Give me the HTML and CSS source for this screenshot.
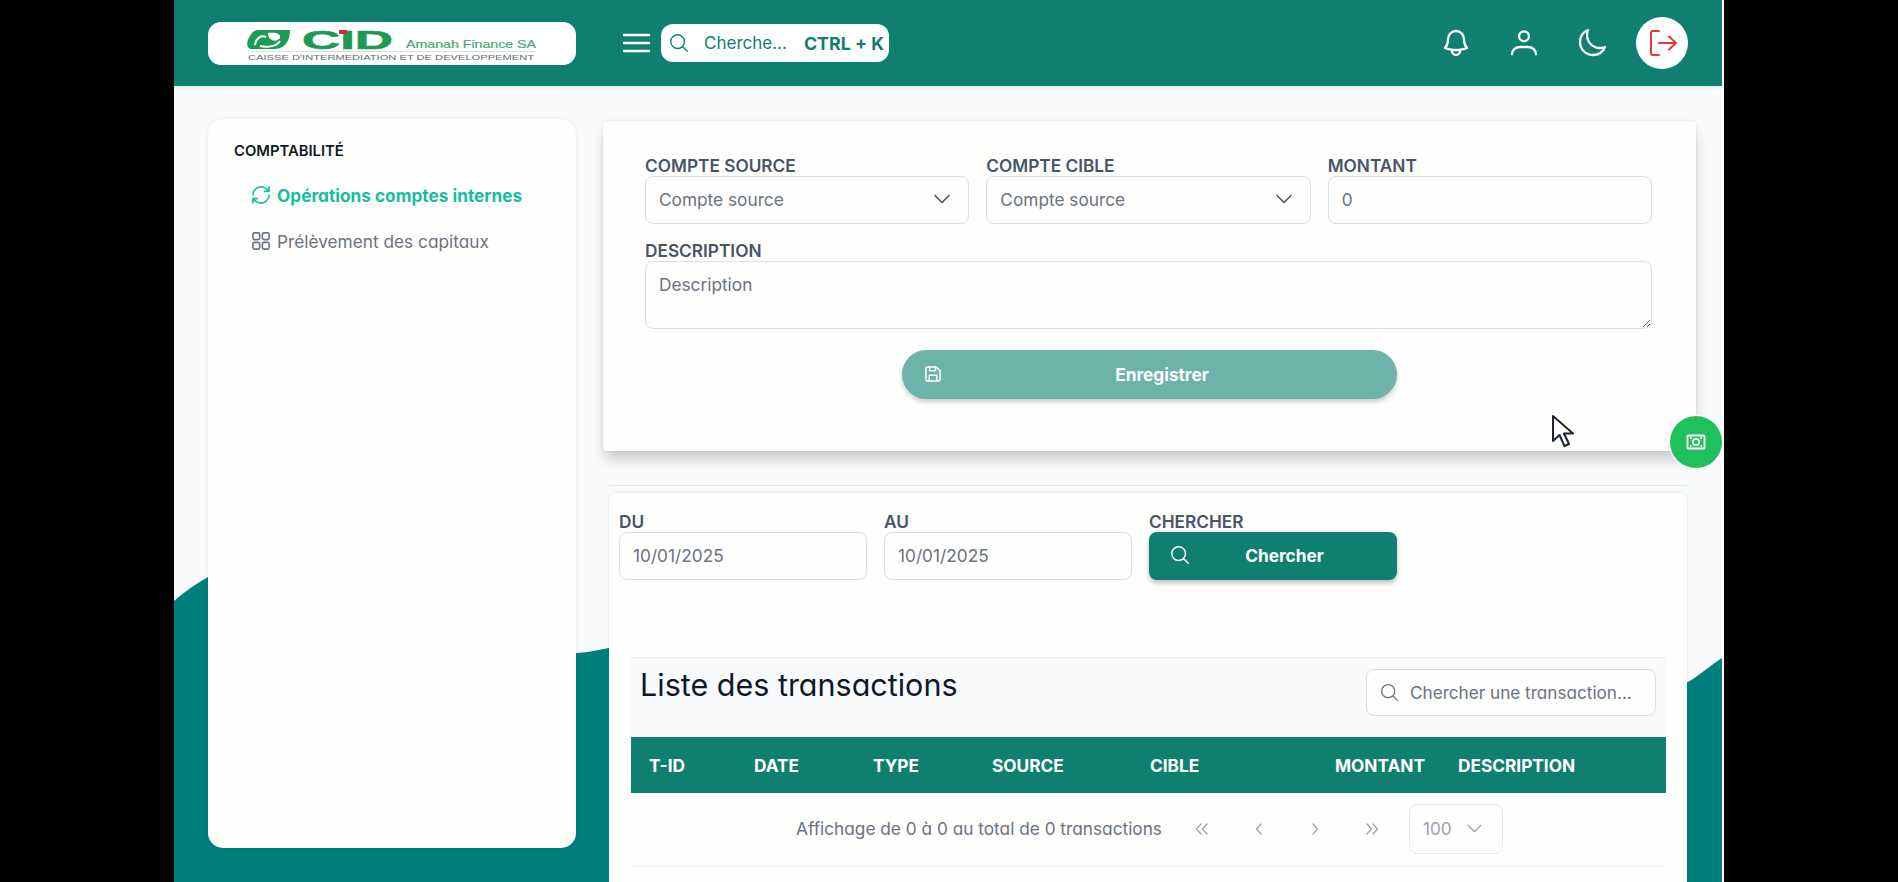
FILE: index.html
```html
<!DOCTYPE html>
<html lang="fr">
<head>
<meta charset="utf-8">
<title>Comptabilité</title>
<link rel="stylesheet" href="styles.css">
</head>
<body>
<div class="app">
  <svg class="wave" viewBox="0 0 1548 796" preserveAspectRatio="none" aria-hidden="true">
    <path d="M0 515 C40 480 110 450 180 462 C270 478 340 568 402 567 C520 560 700 400 900 430 C1140 470 1300 660 1514 596 C1525 590 1538 578 1548 572 L1548 796 L0 796 Z"/>
  </svg>
  <header class="topbar">
    <div class="logo">
      <svg viewBox="0 0 368 43" width="368" height="43" aria-label="CID">
        <path class="logo-leaf" d="M50 8 H82 C82 20 76 27 66 27 H44 C38 27 38 20 42 14 C44 10 47 8 50 8 Z"/>
        <path class="logo-inner" d="M60 11 C69 10 73 12 72 16 C68 21 60 19 60 11 Z"/>
        <path class="logo-swirl" d="M47 23 C48 16 53 13 58 15 M52 24 C60 26 69 24 72 19"/>
        <text class="logo-cid" x="94" y="27" textLength="91" lengthAdjust="spacingAndGlyphs">CID</text>
        <rect class="logo-dot" x="131" y="8" width="8" height="4"/>
        <text class="logo-name" x="198" y="26" textLength="130" lengthAdjust="spacingAndGlyphs">Amanah Finance SA</text>
        <line class="logo-rule" x1="40" y1="29.5" x2="328" y2="29.5"/>
        <text class="logo-sub" x="40" y="38" textLength="286" lengthAdjust="spacingAndGlyphs">CAISSE D'INTERMEDIATION ET DE DEVELOPPEMENT</text>
      </svg>
    </div>
    <button class="menu-btn" aria-label="Menu">
      <svg viewBox="0 0 27 20" width="27" height="20"><path d="M1 2h25M1 10h25M1 18h25"/></svg>
    </button>
    <div class="quick-search">
      <svg class="qs-icon" viewBox="0 0 24 24" width="22" height="22"><path d="m21 21-5.197-5.197m0 0A7.5 7.5 0 1 0 5.196 5.196a7.5 7.5 0 0 0 10.607 10.607Z"/></svg>
      <span class="qs-text">Cherche...</span>
      <span class="qs-key">CTRL + K</span>
    </div>
    <div class="top-actions">
      <button class="top-icon" aria-label="Notifications"><svg viewBox="0 0 24 24" width="32" height="32"><path d="M14.857 17.082a23.848 23.848 0 0 0 5.454-1.31A8.967 8.967 0 0 1 18 9.75V9A6 6 0 0 0 6 9v.75a8.967 8.967 0 0 1-2.312 6.022c1.733.64 3.56 1.085 5.455 1.31m5.714 0a24.255 24.255 0 0 1-5.714 0m5.714 0a3 3 0 1 1-5.714 0"/></svg></button>
      <button class="top-icon" aria-label="Profil"><svg viewBox="0 0 24 24" width="32" height="32"><circle cx="12" cy="7" r="3.700"/><path d="M3 20.500c0-3 2.500-5.500 6-5.500h6c3.500 0 6 2.500 6 5.500"/></svg></button>
      <button class="top-icon" aria-label="Thème"><svg viewBox="0 0 24 24" width="32" height="32"><path d="M21.752 15.002A9.72 9.72 0 0 1 18 15.75c-5.385 0-9.75-4.365-9.75-9.750 0-1.330.266-2.597.748-3.752A9.753 9.753 0 0 0 3 11.250C3 16.635 7.365 21 12.750 21a9.753 9.753 0 0 0 9.002-5.998Z"/></svg></button>
      <button class="logout" aria-label="Déconnexion"><svg viewBox="0 0 28 26" width="28" height="26"><path d="M10 1H3.500A1.500 1.500 0 0 0 2 2.500v21A1.500 1.500 0 0 0 3.500 25H10M10 13h17M20 6.500l7 6.500-7 6.500"/></svg></button>
    </div>
  </header>

  <main class="content">
    <aside class="sidebar">
      <h2 class="side-title">COMPTABILITÉ</h2>
      <a class="side-link active">
        <svg viewBox="2 2 20 20" width="18" height="18"><path d="M3 12a9 9 0 0 1 9-9 9.750 9.750 0 0 1 6.740 2.740L21 8M21 3v5h-5M21 12a9 9 0 0 1-9 9 9.750 9.750 0 0 1-6.740-2.740L3 16M8 16H3v5"/></svg>
        Opérations comptes internes
      </a>
      <a class="side-link">
        <svg viewBox="2 2 20 20" width="18" height="18"><rect x="3" y="3" width="7.500" height="7.500" rx="1.800"/><rect x="13.500" y="3" width="7.500" height="7.500" rx="1.800"/><rect x="3" y="13.500" width="7.500" height="7.500" rx="1.800"/><rect x="13.500" y="13.500" width="7.500" height="7.500" rx="1.800"/></svg>
        Prélèvement des capitaux
      </a>
    </aside>

    <div class="workspace">
      <section class="form-card">
        <div class="form-row">
          <div class="field">
            <label>COMPTE SOURCE</label>
            <div class="control select-like"><span>Compte source</span><svg viewBox="0 0 16 10" width="16" height="10"><path d="M1 1.500l7 7 7-7"/></svg></div>
          </div>
          <div class="field">
            <label>COMPTE CIBLE</label>
            <div class="control select-like"><span>Compte source</span><svg viewBox="0 0 16 10" width="16" height="10"><path d="M1 1.500l7 7 7-7"/></svg></div>
          </div>
          <div class="field">
            <label>MONTANT</label>
            <input class="control" value="0">
          </div>
        </div>
        <div class="field field-desc">
          <label>DESCRIPTION</label>
          <textarea class="control area" placeholder="Description"></textarea>
        </div>
        <button class="save-btn">
          <svg viewBox="0 0 24 24" width="20" height="20"><path d="M6 3.500h10l4.500 4.500v10.500a2 2 0 0 1-2 2h-13a2 2 0 0 1-2-2v-13a2 2 0 0 1 2-2ZM8 3.500v4.500h7V3.500M7.500 20.500v-7h9v7"/></svg>
          <span>Enregistrer</span>
        </button>
      </section>

      <hr class="divider">

      <section class="list-card">
        <div class="filters">
          <div class="field">
            <label>DU</label>
            <input class="control" value="10/01/2025">
          </div>
          <div class="field">
            <label>AU</label>
            <input class="control" value="10/01/2025">
          </div>
          <div class="field">
            <label>CHERCHER</label>
            <button class="search-btn">
              <svg viewBox="0 0 24 24" width="22" height="22"><path d="m21 21-5.197-5.197m0 0A7.5 7.5 0 1 0 5.196 5.196a7.5 7.500 0 0 0 10.607 10.607Z"/></svg>
              <span>Chercher</span>
            </button>
          </div>
        </div>

        <div class="tx">
          <div class="tx-toolbar">
            <h1 class="tx-title">Liste des transactions</h1>
            <div class="tx-search">
              <svg viewBox="0 0 24 24" width="21" height="21"><path d="m21 21-5.197-5.197m0 0A7.5 7.5 0 1 0 5.196 5.196a7.5 7.500 0 0 0 10.607 10.607Z"/></svg>
              <input placeholder="Chercher une transaction...">
            </div>
          </div>
          <table class="tx-table">
            <thead>
              <tr><th>T-ID</th><th>DATE</th><th>TYPE</th><th>SOURCE</th><th>CIBLE</th><th>MONTANT</th><th>DESCRIPTION</th></tr>
            </thead>
          </table>
          <div class="pager">
            <span class="pager-info">Affichage de 0 à 0 au total de 0 transactions</span>
            <div class="pager-btns">
              <button aria-label="Première"><svg viewBox="0 0 14 12" width="14" height="12"><path d="M6 1 1.500 6 6 11M12 1 7.500 6 12 11"/></svg></button>
              <button aria-label="Précédente"><svg viewBox="0 0 14 12" width="14" height="12"><path d="M9 1 4.500 6 9 11"/></svg></button>
              <button aria-label="Suivante"><svg viewBox="0 0 14 12" width="14" height="12"><path d="M5 1l4.500 5L5 11"/></svg></button>
              <button aria-label="Dernière"><svg viewBox="0 0 14 12" width="14" height="12"><path d="M2 1l4.500 5L2 11M8 1l4.500 5L8 11"/></svg></button>
            </div>
            <div class="page-size"><span>100</span><svg viewBox="0 0 16 10" width="15" height="9"><path d="M1 1.500l7 7 7-7"/></svg></div>
          </div>
        </div>
      </section>
    </div>
  </main>

  <button class="fab" aria-label="Caisse">
    <svg viewBox="0 0 20 16" width="20" height="16"><rect x="1.500" y="1.500" width="17" height="13" rx="1"/><circle cx="10" cy="8" r="3.200"/><path d="M4 4h1.500M14.500 4H16M4 12h1.500M14.500 12H16"/></svg>
  </button>
  <svg class="cursor" viewBox="0 0 24 34" width="24" height="34" aria-hidden="true"><path d="M2 2v25l6.500-6 5 11 4.500-2-5-10.500h9Z"/></svg>
</div>
</body>
</html>
```
FILE: styles.css
```css
* { box-sizing: border-box; }
html, body { height: 100%; }
body {
  margin: 0;
  padding-left: 174px;
  background: #000;
  overflow: hidden;
  font-family: Inter, "Noto Sans", sans-serif;
  font-feature-settings: "cv11" 1;
  color: #4b5563;
}
button { font: inherit; border: 0; background: none; padding: 0; cursor: pointer; }
input, textarea { font: inherit; font-feature-settings: inherit; }

.app {
  position: relative;
  width: 1550px;
  height: 882px;
  overflow: hidden;
  background: #f9fafc;
  border-right: 2px solid #fff;
}
.wave {
  position: absolute;
  left: 0;
  top: 86px;
  width: 1548px;
  height: 796px;
}
.wave path { fill: #017f7c; }

/* top bar */
.topbar {
  position: relative;
  display: flex;
  align-items: center;
  height: 86px;
  padding: 0 34px 0 34px;
  background: #0f806f;
  box-shadow: 0 1px 3px rgba(0, 0, 0, .12);
}
.logo {
  width: 368px;
  height: 43px;
  background: #fff;
  border-radius: 13px;
  overflow: hidden;
}
.logo svg { display: block; }
.logo-leaf { fill: #1f9a55; }
.logo-inner { fill: #fff; }
.logo-swirl { fill: none; stroke: #fff; stroke-width: 2; }
.logo-cid { font: 900 26px "Liberation Sans", sans-serif; fill: #1f9a55; stroke: #1f9a55; stroke-width: .6; }
.logo-dot { fill: #e0262e; }
.logo-name { font: 400 10px "Liberation Sans", sans-serif; fill: #4ba97c; stroke: #4ba97c; stroke-width: .2; }
.logo-rule { stroke: #cfe6da; stroke-width: 1; }
.logo-sub { font: 400 7px "Liberation Sans", sans-serif; fill: #666c6f; }

.menu-btn { width: 27px; height: 20px; margin-left: 47px; display: block; }
.menu-btn svg { display: block; fill: none; stroke: #fff; stroke-width: 2.600; stroke-linecap: round; }

.quick-search {
  display: flex;
  align-items: center;
  width: 228px;
  height: 38px;
  margin-left: 11px;
  padding: 0 5px 0 7px;
  background: #fff;
  border-radius: 12px;
  color: #0f806f;
  font-size: 17px;
}
.qs-icon { fill: none; stroke: currentColor; stroke-width: 1.500; stroke-linecap: round; flex: none; }
.qs-text { margin-left: 14px; flex: 1; }
.qs-key { font-weight: 700; white-space: nowrap; font-size: 17.800px; }

.top-actions { display: flex; align-items: center; margin-left: auto; }
.top-icon { width: 32px; height: 32px; margin-right: 36px; display: block; }
.top-icon:nth-child(3) { margin-right: 28px; }
.top-icon svg { display: block; fill: none; stroke: #fff; stroke-width: 1.700; stroke-linecap: round; stroke-linejoin: round; }
.logout {
  width: 52px;
  height: 52px;
  border-radius: 50%;
  background: #fff;
  display: flex;
  align-items: center;
  justify-content: center;
}
.logout svg { fill: none; stroke: #e5383b; stroke-width: 2; stroke-linecap: round; stroke-linejoin: round; margin-left: 2px; }

/* layout */
.content {
  position: relative;
  display: flex;
  align-items: flex-start;
  gap: 27px;
  padding: 33px 26px 0 34px;
}
.sidebar {
  flex: none;
  width: 368px;
  height: 729px;
  padding: 22px 26px;
  background: #fefefd;
  border-radius: 15px;
  box-shadow: 0 0 4px rgba(0, 0, 0, .08);
}
.side-title {
  margin: 0 0 10px;
  font-size: 14.800px;
  line-height: 21px;
  font-weight: 600;
  color: #111827;
  font-feature-settings: normal;
}
.side-link {
  display: flex;
  align-items: center;
  gap: 7px;
  height: 46px;
  padding-left: 18px;
  font-size: 17.250px;
  color: #6b7280;
}
.side-link svg { flex: none; fill: none; stroke: currentColor; stroke-width: 1.800; stroke-linecap: round; stroke-linejoin: round; }
.side-link.active { color: #17bd9f; font-weight: 700; }

.workspace { flex: 1; min-width: 0; padding-top: 2px; }

/* form */
.form-card {
  height: 330px;
  padding: 33px 44px 0 42px;
  background: #fefefd;
  border-radius: 4px;
  box-shadow: 0 10px 15px -3px rgba(0, 0, 0, .22), 0 0 3px rgba(0, 0, 0, .1);
}
.form-row { display: grid; grid-template-columns: repeat(3, 1fr); gap: 17px; }
.field { min-width: 0; }
.field label {
  display: block;
  height: 22px;
  font-size: 17.250px;
  line-height: 24px;
  font-weight: 600;
  color: #475569;
  font-feature-settings: normal;
}
.control {
  display: block;
  width: 100%;
  height: 48px;
  padding: 0 13px 2px;
  background: #fefefd;
  border: 1px solid #dcdfe4;
  border-radius: 8px;
  font-size: 17.250px;
  color: #6b7280;
  outline: 0;
}
.select-like { display: flex; align-items: center; justify-content: space-between; padding-right: 18px; }
.select-like svg { fill: none; stroke: #4b5563; stroke-width: 1.600; stroke-linecap: round; stroke-linejoin: round; }
.field-desc { margin-top: 15px; }
.area { height: 68px; padding: 12px 13px; resize: vertical; }
.area::placeholder { color: #6b7280; opacity: 1; }
.save-btn {
  display: flex;
  align-items: center;
  width: 495px;
  height: 49px;
  margin: 21px 0 0 257px;
  padding: 0 16px 1px 21px;
  border-radius: 25px;
  background: #6db3a9;
  color: #fff;
  font-weight: 700;
  font-size: 17.250px;
  box-shadow: 0 3px 5px rgba(0, 0, 0, .2);
}
.save-btn svg { flex: none; fill: none; stroke: #fff; stroke-width: 1.800; stroke-linejoin: round; }
.save-btn span { flex: 1; text-align: center; }

.divider {
  margin: 34px 9px 7px 6px;
  height: 1px;
  border: 0;
  background: #dfe6ec;
}

/* list */
.list-card {
  height: 500px;
  margin: 0 9px 0 6px;
  padding: 17px 21px 0 10px;
  background: #fefefd;
  border-radius: 8px 8px 0 0;
  box-shadow: 0 0 3px rgba(0, 0, 0, .1);
}
.filters {
  display: grid;
  grid-template-columns: repeat(3, 248px);
  gap: 17px;
}
.search-btn {
  display: flex;
  align-items: center;
  width: 100%;
  height: 48px;
  padding: 0 0 2px 20px;
  border-radius: 8px;
  background: #0f806f;
  color: #fff;
  font-weight: 700;
  font-size: 17.250px;
  box-shadow: 0 3px 5px rgba(0, 0, 0, .25);
}
.search-btn svg { flex: none; fill: none; stroke: #fff; stroke-width: 1.600; stroke-linecap: round; }
.search-btn span { flex: 1; text-align: center; padding-right: 19px; }

.tx { margin: 77px 0 0 12px; }
.tx-toolbar {
  display: flex;
  justify-content: space-between;
  align-items: flex-start;
  height: 80px;
  padding: 9px 10px 0 9px;
  background: #f9fafc;
  border-top: 1px solid #e8ecf0;
}
.tx-title {
  margin: 0;
  font-size: 30.500px;
  line-height: 36px;
  font-weight: 400;
  color: #111827;
}
.tx-search {
  display: flex;
  align-items: center;
  gap: 10px;
  width: 290px;
  height: 47px;
  margin-top: 2px;
  padding: 0 10px 0 12px;
  background: #fefefd;
  border: 1px solid #d8dce2;
  border-radius: 8px;
  color: #6b7280;
}
.tx-search svg { flex: none; fill: none; stroke: currentColor; stroke-width: 1.500; stroke-linecap: round; }
.tx-search input {
  flex: 1;
  min-width: 0;
  border: 0;
  outline: 0;
  padding: 0;
  background: none;
  font-size: 17.150px;
}
.tx-search input::placeholder { color: #6b7280; opacity: 1; }

.tx-table {
  width: 100%;
  border-collapse: collapse;
  table-layout: fixed;
  background: #0f806f;
}
.tx-table th {
  height: 56px;
  padding: 0 0 0 18px;
  text-align: left;
  font-size: 17.250px;
  font-weight: 700;
  color: #fff;
  white-space: nowrap;
  font-feature-settings: normal;
}
.tx-table th:nth-child(1) { width: 105px; }
.tx-table th:nth-child(2) { width: 119px; }
.tx-table th:nth-child(3) { width: 119px; }
.tx-table th:nth-child(4) { width: 158px; }
.tx-table th:nth-child(5) { width: 185px; }
.tx-table th:nth-child(6) { width: 123px; }

.pager {
  display: flex;
  align-items: center;
  justify-content: center;
  height: 74px;
  padding: 0 0 2px 2px;
  border-bottom: 1px solid #f1f2f5;
  font-size: 17.250px;
  color: #6b7280;
}
.pager-btns { display: flex; margin: 0 9px 0 12px; }
.pager-btns button { width: 56.500px; height: 40px; display: flex; align-items: center; justify-content: center; }
.pager-btns svg { fill: none; stroke: #9ca3af; stroke-width: 1.300; stroke-linecap: round; stroke-linejoin: round; }
.page-size {
  display: flex;
  align-items: center;
  gap: 15px;
  width: 94px;
  height: 50px;
  padding-left: 13px;
  border: 1px solid #e8eaee;
  border-radius: 8px;
  color: #9ca3af;
}
.page-size svg { fill: none; stroke: #9ca3af; stroke-width: 1.500; stroke-linecap: round; stroke-linejoin: round; }

/* overlays */
.fab {
  position: absolute;
  left: 1496px;
  top: 416px;
  width: 52px;
  height: 52px;
  border-radius: 50%;
  background: #22c05c;
  display: flex;
  align-items: center;
  justify-content: center;
  box-shadow: 0 0 0 2px rgba(255, 255, 255, .5);
}
.fab svg { fill: none; stroke: #fff; stroke-width: 1.800; }
.cursor { position: absolute; left: 1377px; top: 414px; }
.cursor path { fill: #fff; stroke: #1f2430; stroke-width: 2; stroke-linejoin: round; }
```
